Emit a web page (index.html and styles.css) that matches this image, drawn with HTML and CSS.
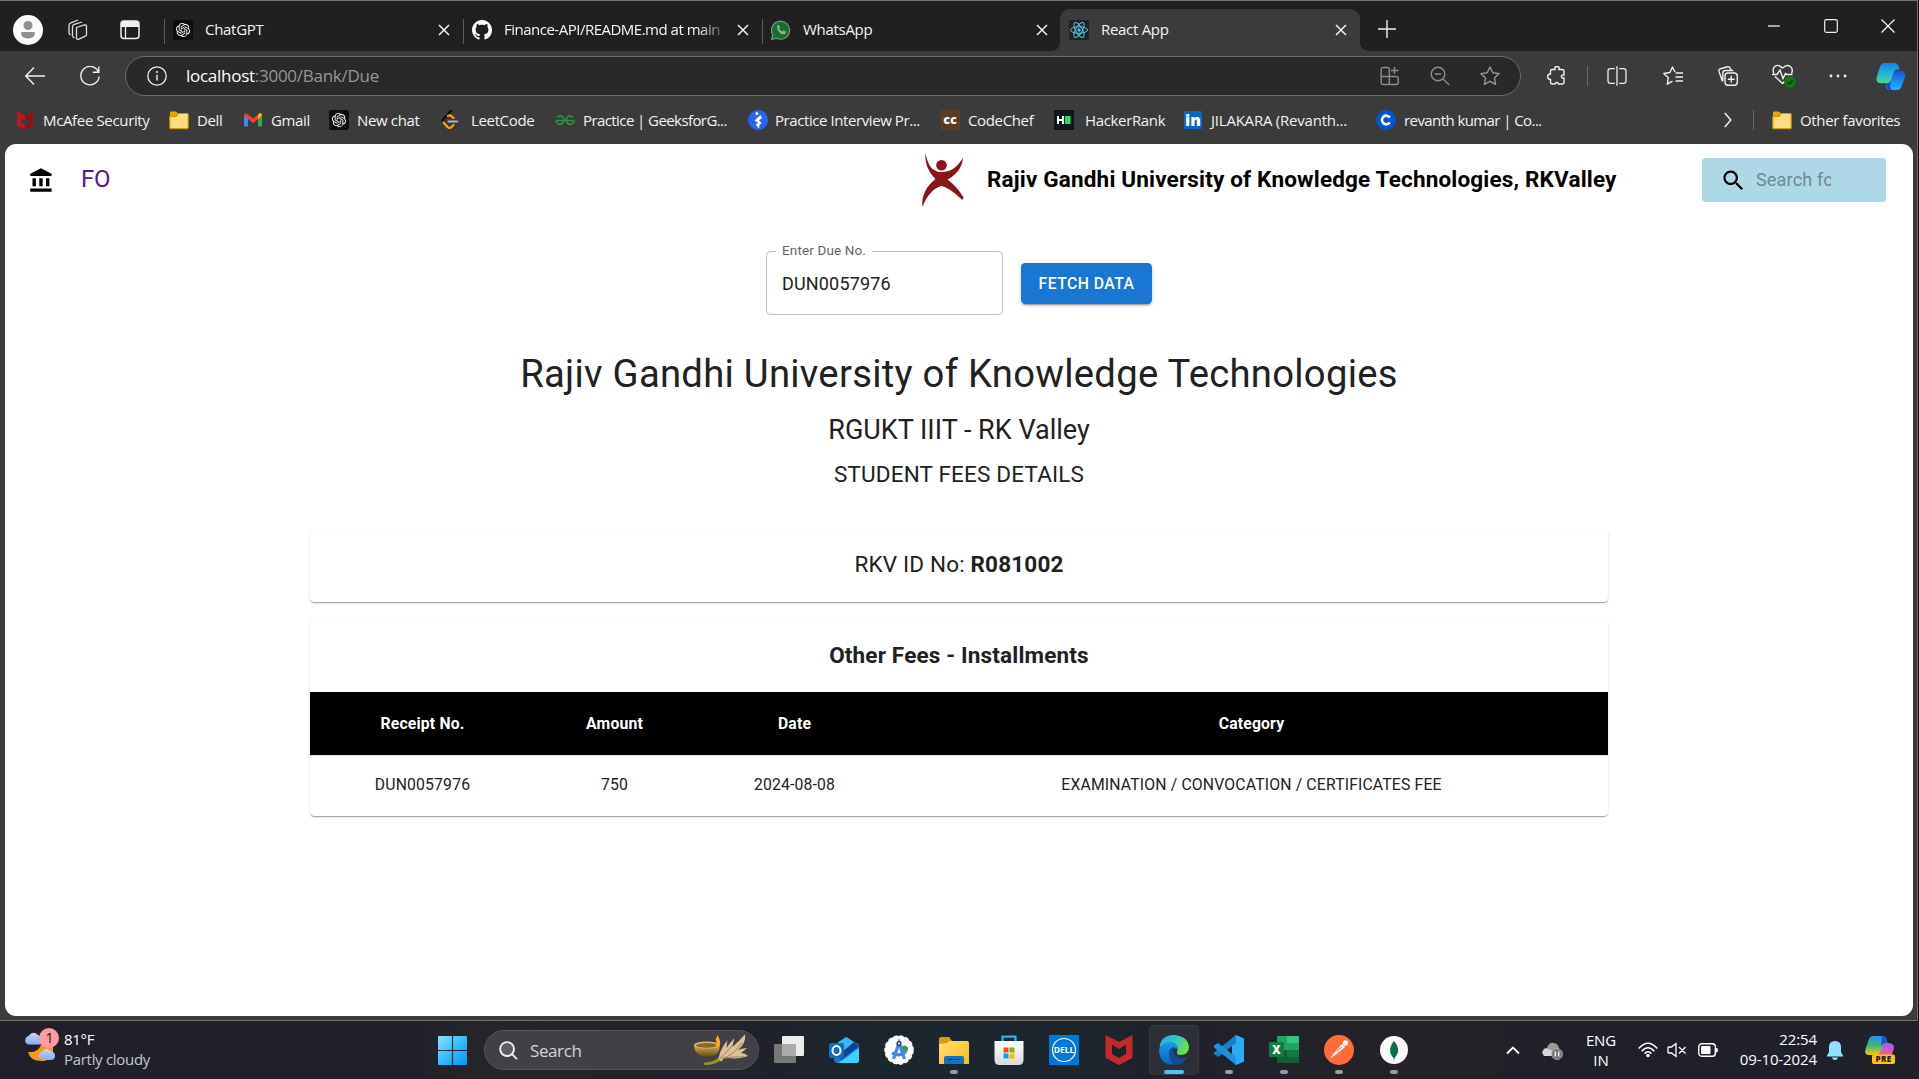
FILE: index.html
```html
<!DOCTYPE html>
<html lang="en">
<head>
<meta charset="utf-8">
<title>React App</title>
<link rel="stylesheet" href="styles.css">
</head>
<body>
<svg class="defs" aria-hidden="true">
  <defs>
    <symbol id="close" viewBox="0 0 12 12"><path d="M1 1l10 10M11 1L1 11" fill="none" stroke="#f2f2f2" stroke-width="1.5"/></symbol>
    <symbol id="folder" viewBox="0 0 20 20"><path d="M1 2.5q0-1 1-1h5l2 2-2 3H1z" fill="#e0a800"/><path d="M.8 6.5H7l2-3h9.2q1 0 1 1v13.2q0 1-1 1H1.800q-1 0-1-1z" fill="#ffdc7c" stroke="#c99500" stroke-width="1.1"/></symbol>
    <symbol id="openai" viewBox="0 0 34 34"><rect width="34" height="34" rx="5" fill="#0d0d0d"/><path transform="translate(5 5)" fill="#fff" d="M22.2819 9.8211a5.9847 5.9847 0 0 0-.5157-4.9108 6.0462 6.0462 0 0 0-6.5098-2.9A6.0651 6.0651 0 0 0 4.9807 4.1818a5.9847 5.9847 0 0 0-3.9977 2.9 6.0462 6.0462 0 0 0 .7427 7.0966 5.98 5.98 0 0 0 .511 4.9107 6.051 6.051 0 0 0 6.5146 2.9001A5.9847 5.9847 0 0 0 13.2599 24a6.0557 6.0557 0 0 0 5.7718-4.2058 5.9894 5.9894 0 0 0 3.9977-2.9001 6.0557 6.0557 0 0 0-.7475-7.0729zm-9.022 12.6081a4.4755 4.4755 0 0 1-2.8764-1.0408l.1419-.0804 4.7783-2.7582a.7948.7948 0 0 0 .3927-.6813v-6.7369l2.02 1.1686a.071.071 0 0 1 .038.052v5.5826a4.504 4.504 0 0 1-4.4945 4.4944zm-9.6607-4.1254a4.4708 4.4708 0 0 1-.5346-3.0137l.142.0852 4.783 2.7582a.7712.7712 0 0 0 .7806 0l5.8428-3.3685v2.3324a.0804.0804 0 0 1-.0332.0615L9.74 19.9502a4.4992 4.4992 0 0 1-6.1408-1.6464zM2.3408 7.8956a4.485 4.485 0 0 1 2.3655-1.9728V11.6a.7664.7664 0 0 0 .3879.6765l5.8144 3.3543-2.0201 1.1685a.0757.0757 0 0 1-.071 0l-4.8303-2.7865A4.504 4.504 0 0 1 2.3408 7.872zm16.5963 3.8558L13.1038 8.364 15.1192 7.2a.0757.0757 0 0 1 .071 0l4.8303 2.7913a4.4944 4.4944 0 0 1-.6765 8.1042v-5.6772a.79.79 0 0 0-.407-.667zm2.0107-3.0231l-.142-.0852-4.7735-2.7818a.7759.7759 0 0 0-.7854 0L9.409 9.2297V6.8974a.0662.0662 0 0 1 .0284-.0615l4.8303-2.7866a4.4992 4.4992 0 0 1 6.6802 4.66zM8.3065 12.863l-2.02-1.1638a.0804.0804 0 0 1-.038-.0567V6.0742a4.4992 4.4992 0 0 1 7.3757-3.4537l-.142.0805L8.704 5.459a.7948.7948 0 0 0-.3927.6813zm1.0976-2.3654l2.602-1.4998 2.6069 1.4998v2.9994l-2.5974 1.4997-2.6067-1.4997Z"/></symbol>
    <linearGradient id="win" x1="0" y1="0" x2="1" y2="1"><stop offset="0" stop-color="#8be4ff"/><stop offset=".5" stop-color="#36bdfb"/><stop offset="1" stop-color="#0a93f5"/></linearGradient>
    <linearGradient id="cop1" x1="0" y1="0" x2="0" y2="1"><stop offset="0" stop-color="#1780e8"/><stop offset=".5" stop-color="#1fb3dc"/><stop offset="1" stop-color="#4fd78f"/></linearGradient>
    <linearGradient id="cop2" x1="0" y1="0" x2="0" y2="1"><stop offset="0" stop-color="#1c50d8"/><stop offset="1" stop-color="#1cb8ff"/></linearGradient>
    <linearGradient id="pre1" x1="0" y1="0" x2="0" y2="1"><stop offset="0" stop-color="#2e8cf0"/><stop offset=".5" stop-color="#3cb878"/><stop offset="1" stop-color="#ffc800"/></linearGradient>
    <linearGradient id="pre2" x1="0" y1="0" x2="0" y2="1"><stop offset="0" stop-color="#a45cf5"/><stop offset="1" stop-color="#f5608c"/></linearGradient>
    <linearGradient id="edge1" x1="0" y1="0" x2="1" y2=".4"><stop offset="0" stop-color="#28a9e8"/><stop offset=".5" stop-color="#2cc3d4"/><stop offset="1" stop-color="#68e04a"/></linearGradient>
    <linearGradient id="edge2" x1="0" y1="0" x2="0" y2="1"><stop offset="0" stop-color="#1a9de4"/><stop offset="1" stop-color="#0a63c4"/></linearGradient>
    <linearGradient id="fold" x1="0" y1="0" x2="1" y2="1"><stop offset="0" stop-color="#ffe07a"/><stop offset="1" stop-color="#fdbb10"/></linearGradient>
    <linearGradient id="cloud" x1="0" y1="0" x2="0" y2="1"><stop offset="0" stop-color="#c0d6fc"/><stop offset="1" stop-color="#8aaeed"/></linearGradient>
    <linearGradient id="bowl" x1="0" y1="0" x2="0" y2="1"><stop offset="0" stop-color="#d8b35a"/><stop offset="1" stop-color="#6a4a14"/></linearGradient>
    <linearGradient id="bag" x1="0" y1="0" x2="0" y2="1"><stop offset="0" stop-color="#fff"/><stop offset="1" stop-color="#d8d8d8"/></linearGradient>
  </defs>
</svg>

<div class="window">
  <header class="titlebar">
    <div class="corner">
      <svg class="avatar" viewBox="0 0 30 30"><circle cx="15" cy="15" r="15" fill="#fafafa"/><circle cx="15" cy="10.500" r="4.500" fill="#8f8f8f"/><path d="M8 17h14q0 6.500-7 6.500T8 17z" fill="#8f8f8f"/></svg>
      <svg class="workspaces" viewBox="0 0 22 22" fill="none" stroke="#ddd" stroke-width="1.300"><path d="M10.500 8.500l8-2.500q2-.5 2 1.500v8q0 1.200-1.200 1.700l-6.500 3q-2.300.8-2.300-1.500z"/><path d="M6.500 17.500V8q0-2 1.800-2.600L16 3M3 14.500V6.500q0-2 1.800-2.600L12 1"/><path d="M6.500 17.500l2 1.500M3 14.500l1.500 1.500"/></svg>
      <svg class="tabmenu" viewBox="0 0 20 20"><rect x="1" y="1" width="18" height="17.500" rx="3" fill="none" stroke="#f0f0f0" stroke-width="1.500"/><path d="M1 4q0-3 3-3h12q3 0 3 3v3H1z" fill="#f0f0f0"/><path d="M5.500 7v11" stroke="#f0f0f0" stroke-width="1.300"/></svg>
    </div>
    <div class="tab">
      <svg class="favicon"><use href="#openai"/></svg>
      <span class="tab-title">ChatGPT</span>
      <svg class="tab-close"><use href="#close"/></svg>
    </div>
    <div class="tab">
      <svg class="favicon" viewBox="0 0 16 16"><path fill="#fff" d="M8 0C3.580 0 0 3.580 0 8c0 3.540 2.290 6.530 5.470 7.590.4.070.55-.17.55-.38 0-.19-.01-.82-.01-1.490-2.010.37-2.530-.49-2.690-.94-.09-.23-.48-.94-.82-1.130-.28-.15-.68-.52-.01-.53.63-.01 1.080.58 1.230.82.72 1.210 1.870.87 2.330.66.07-.52.28-.87.51-1.070-1.780-.2-3.640-.89-3.640-3.950 0-.87.31-1.590.82-2.150-.08-.2-.36-1.020.08-2.120 0 0 .67-.21 2.200.82.64-.18 1.320-.27 2-.27.68 0 1.360.09 2 .27 1.530-1.040 2.200-.82 2.200-.82.44 1.100.16 1.920.08 2.120.51.56.82 1.270.82 2.150 0 3.070-1.870 3.750-3.650 3.950.29.25.54.73.54 1.480 0 1.070-.01 1.930-.01 2.200 0 .21.15.46.55.38A8.013 8.013 0 0016 8c0-4.420-3.580-8-8-8z"/></svg>
      <span class="tab-title fade">Finance-API/README.md at main</span>
      <svg class="tab-close"><use href="#close"/></svg>
    </div>
    <div class="tab">
      <svg class="favicon" viewBox="0 0 20 20"><path d="M.5 19.500l1.300-4.800A9 9 0 1 1 5.500 18.200z" fill="#15702d" stroke="#8c8c8c" stroke-width="1.200"/><path d="M6.500 5.500c.8-.8 1.500-.3 1.800.5l.5 1.300c0 .6-.8 1-.8 1.300.8 1.600 1.900 2.500 3.400 3.100.5 0 .9-1.100 1.400-1.100l2 1c.4.4-.2 2-1.200 2.400-3.500 1.300-9-4.200-7.100-8.500z" fill="#a5a5a5"/></svg>
      <span class="tab-title">WhatsApp</span>
      <svg class="tab-close"><use href="#close"/></svg>
    </div>
    <div class="tab active">
      <svg class="favicon" viewBox="0 0 20 20"><rect width="20" height="20" rx="2" fill="#202226"/><g fill="none" stroke="#58c4dc" stroke-width="1"><ellipse cx="10" cy="10" rx="8.500" ry="3.300"/><ellipse cx="10" cy="10" rx="8.500" ry="3.300" transform="rotate(60 10 10)"/><ellipse cx="10" cy="10" rx="8.500" ry="3.300" transform="rotate(120 10 10)"/></g><circle cx="10" cy="10" r="1.700" fill="#58c4dc"/></svg>
      <span class="tab-title">React App</span>
      <svg class="tab-close"><use href="#close"/></svg>
    </div>
    <svg class="newtab" viewBox="0 0 18 18"><path d="M9 0v18M0 9h18" stroke="#f0f0f0" stroke-width="1.400"/></svg>
    <div class="controls">
      <svg viewBox="0 0 14 14"><path d="M1 7h12" stroke="#fff" stroke-width="1.200"/></svg>
      <svg viewBox="0 0 14 14"><rect x=".7" y=".7" width="12.600" height="12.600" rx="1.500" fill="none" stroke="#eee" stroke-width="1.200"/></svg>
      <svg viewBox="0 0 14 14"><path d="M.5.500l13 13M13.500.500l-13 13" stroke="#fff" stroke-width="1.200"/></svg>
    </div>
  </header>

  <div class="toolbar">
    <svg class="ic20" viewBox="0 0 20 20" fill="none" stroke="#f0f0f0" stroke-width="1.400"><path d="M20 10H1M9 1.500L.8 10 9 18.500"/></svg>
    <svg class="ic20" viewBox="0 0 20 20" fill="none" stroke="#eee" stroke-width="1.400"><path d="M18.500 6A9.200 9.200 0 1 0 19.200 10.500M18.800.5V6.200h-6"/></svg>
    <div class="address">
      <svg class="ic20" viewBox="0 0 20 20"><circle cx="10" cy="10" r="9.200" fill="none" stroke="#eee" stroke-width="1.300"/><path d="M10 8.800v5.700" stroke="#eee" stroke-width="1.400"/><circle cx="10" cy="6" r="1" fill="#eee"/></svg>
      <span class="url"><b>localhost</b>:3000/Bank/Due</span>
      <svg class="ic20" viewBox="0 0 20 20" fill="none" stroke="#8b8b8b" stroke-width="1.400"><path d="M9.300 18.500V3.500q0-2-2-2H3.200q-2 0-2 2v13q0 2 2 2h13q2 0 2-2v-4q0-2-2-2H1.200M14.500 1v7M11 4.500h7.500"/></svg>
      <svg class="ic20" viewBox="0 0 20 20" fill="none" stroke="#8b8b8b" stroke-width="1.400"><circle cx="8" cy="8" r="6.800"/><path d="M13 13l6.300 6M4.800 8h6.400"/></svg>
      <svg class="ic20" viewBox="0 0 20 20" fill="none" stroke="#969696" stroke-width="1.400" stroke-linejoin="round"><path d="M10 1l2.800 5.700 6.300.9-4.600 4.400 1.100 6.300L10 15.300l-5.600 3 1.100-6.300L.9 7.600l6.300-.9z"/></svg>
    </div>
    <svg class="ic20" viewBox="0 0 20 20" fill="none" stroke="#f0f0f0" stroke-width="1.400"><path d="M3.500 5Q3.500 3.500 5 3.500h3q-.7-3 2-3t2 3h3q2 0 2 2v3.500q-2.500-.5-2.500 1.500t2.500 1.500V16q0 2-2 2h-3.500q-.3-1.500-1.800-1.500T8 18H5.500q-2 0-2-2v-2.500Q.7 13.500.7 10.700t2.800-2.700z"/></svg>
    <i class="rule"></i>
    <svg class="ic20" viewBox="0 0 20 20" fill="none" stroke="#f0f0f0" stroke-width="1.300"><path d="M7.800 17.300H3.500q-2.500 0-2.500-2.500V5.200q0-2.500 2.500-2.500h4.300M12.200 2.700h4.300q2.500 0 2.500 2.500v9.600q0 2.500-2.500 2.500h-4.300M10 .3v19.400"/></svg>
    <svg class="ic20" viewBox="0 0 20 20" fill="none" stroke="#f0f0f0" stroke-width="1.400" stroke-linejoin="round"><path d="M12 6L9.500 1 6.900 6.500.8 7.500l4.500 4.200-1 6.400 5.200-2.900M12.500 7H20M12.500 11H20M12.500 15H20"/></svg>
    <svg class="ic20" viewBox="0 0 20 20" fill="none" stroke="#f0f0f0" stroke-width="1.400"><rect x="7" y="7" width="12.300" height="12.300" rx="3"/><path d="M13.200 9.800v6.800M9.800 13.200h6.800M4.500 15.500L1 5.500Q.5 3.500 2.500 2.700L9.500.8q2-.3 2.800 1.500L13 4.500M4.800 15V7q0-2.500 2.500-2.500h8"/></svg>
    <svg class="heart" viewBox="0 0 24 24" fill="none" stroke="#f0f0f0" stroke-width="1.400"><path d="M1.800 9.500Q0 4.500 3 2.200T10.500 4Q15 0 18.300 2.500T19.500 9.500M3 12.500l7.500 7 2-2M0 10.500h5L8 6l3 8.500 2.500-5 1 1h6"/><circle cx="18" cy="18" r="5.700" fill="#107c10" stroke="none"/><path d="M15.200 18l2 2 3.500-4" stroke="#0a3a0a"/></svg>
    <svg class="ic20" viewBox="0 0 20 20" fill="#f0f0f0"><circle cx="3" cy="10" r="1.400"/><circle cx="10" cy="10" r="1.400"/><circle cx="17" cy="10" r="1.400"/></svg>
    <svg class="copilot" viewBox="0 0 30 28"><path d="M14 8h10q5-.5 6 5l-4 11q-1.500 4-5 4h-7q-4 0-4-6z" fill="url(#cop2)"/><path d="M8 0h11q3 0 4 4l1 3q-5-1-6.500 3l-2.500 8q-1 3-4 3H5q-6 0-5-6L3.500 4Q5 0 8 0z" fill="url(#cop1)"/><path d="M10.500 21q3.500 0 4.500-4l-1 6q0 4 2 5h-2q-3.500 0-3.500-7z" fill="#1b3fe0"/></svg>
  </div>

  <nav class="bookmarks">
    <span class="bm"><svg viewBox="0 0 20 20"><path d="M2 1l8 4.500v5L6 8.500V13l4 2.200V20l-8-4.500z" fill="#c01818"/><path d="M18 1l-8 4.500v5l4-2V13l-4 2.200V20l8-4.500z" fill="#8c1414"/></svg>McAfee Security</span>
    <span class="bm"><svg><use href="#folder"/></svg>Dell</span>
    <span class="bm"><svg viewBox="0 0 20 20"><path d="M1 5v10.500q0 1 1 1h3V8z" fill="#4285f4"/><path d="M15 8v8.500h3q1 0 1-1V5z" fill="#34a853"/><path d="M1 5.500Q1 3 3 3l7 5.500L17 3q2 0 2 2.500L15 9l-5 4-5-4z" fill="#ea4335"/><path d="M15 5l2-2q2 0 2 2.500L15 9z" fill="#fbbc04"/></svg>Gmail</span>
    <span class="bm"><svg><use href="#openai"/></svg>New chat</span>
    <span class="bm lc"><svg viewBox="0 0 20 20" fill="none" stroke-linecap="round" stroke-width="2.200"><path d="M11 1L3.500 9q-1.800 2 0 4" stroke="#0c0c0c"/><path d="M8 5.800q2-1 3.500.5L13.500 8M3.500 12.500l4 4.500q2 2 4 0l2-2" stroke="#ffa116"/><path d="M8.500 11.500H17" stroke="#b3b3b3"/></svg>LeetCode</span>
    <span class="bm tight"><svg viewBox="0 0 20 20" fill="none" stroke="#2f8d46" stroke-width="1.700"><path d="M1 10.500h18M2 7.500q3-3 5.500-.5T8 12.500t-5 1.200-1.500-3.200M18 7.500q-3-3-5.500-.5t-.5 5.500 5 1.200 1.500-3.200"/></svg>Practice | GeeksforG...</span>
    <span class="bm pi"><svg viewBox="0 0 20 20"><circle cx="10" cy="10" r="10" fill="#2a62f5"/><circle cx="8.800" cy="3.500" r="1.500" fill="#fff"/><path d="M12.500 5L6.500 10.500l4 2.500-3 1.500 3.500 4 .5-3.500 2-2-2.500-2.800 3-2z" fill="#fff"/></svg>Practice Interview Pr...</span>
    <span class="bm"><svg viewBox="0 0 20 20"><rect width="20" height="20" fill="#5b3a26"/><text x="10" y="14" class="cc">cc</text></svg>CodeChef</span>
    <span class="bm hr"><svg viewBox="0 0 20 20"><rect width="20" height="20" fill="#0e141e"/><path d="M4 6v8M9 6v8M4 10h5" stroke="#fff" stroke-width="2" fill="none"/><rect x="11" y="6" width="5.500" height="8" fill="#1ee063"/></svg>HackerRank</span>
    <span class="bm jr"><svg viewBox="0 0 20 20"><rect x="1" y="1" width="18" height="18" rx="1.500" fill="#0a66c2"/><text x="10" y="16" class="in">in</text></svg>JILAKARA (Revanth...</span>
    <span class="bm tight"><svg viewBox="0 0 20 20"><circle cx="10" cy="10" r="10" fill="#0056d2"/><path d="M13.800 7.500A4.300 4.300 0 1 0 13.800 12.500" fill="none" stroke="#fff" stroke-width="2.700"/></svg>revanth kumar | Co...</span>
    <svg class="chev" viewBox="0 0 8 16"><path d="M.8 1l6 7-6 7" fill="none" stroke="#f0f0f0" stroke-width="1.500"/></svg>
    <i class="rule"></i>
    <span class="bm"><svg><use href="#folder"/></svg>Other favorites</span>
  </nav>

  <main class="page">
    <header class="appbar">
      <svg class="bank" viewBox="0 0 24 24"><path d="M4 10v7h3v-7H4zm6 0v7h3v-7h-3zM2 22h19v-3H2v3zm14-12v7h3v-7h-3zm-4.500-9L2 6v2h19V6l-9.500-5z"/></svg>
      <a class="fo">FO</a>
      <svg class="logo" viewBox="0 0 42 54" fill="#8a1518"><circle cx="20" cy="12.300" r="5.300"/><path d="M4 0C6 11 10 19 20 19S37 13 41.500 4.500C41 14 35 22 26 26.500C32 31 38 37 42 44.500L41 47C34 41 27 34.500 20 33C12 35 5 43 1 54C-.5 43 5 33 14 26C7 19 3 10 4 0z"/></svg>
      <h1 class="brand">Rajiv Gandhi University of Knowledge Technologies, RKValley</h1>
      <div class="search"><svg viewBox="0 0 24 24"><path d="M15.500 14h-.79l-.28-.27C15.410 12.590 16 11.110 16 9.500 16 5.910 13.090 3 9.500 3S3 5.910 3 9.500 5.910 16 9.500 16c1.610 0 3.090-.59 4.230-1.570l.27.28v.79l5 4.990L20.490 19l-4.990-5zm-6 0C7.010 14 5 11.990 5 9.500S7.010 5 9.500 5 14 7.010 14 9.500 11.990 14 9.500 14z"/></svg><input type="text" placeholder="Search for"></div>
    </header>

    <form class="lookup">
      <fieldset class="field"><legend>Enter Due No.</legend><span>DUN0057976</span></fieldset>
      <button type="button" class="fetch">FETCH DATA</button>
    </form>

    <section class="headings">
      <h2>Rajiv Gandhi University of Knowledge Technologies</h2>
      <h3>RGUKT IIIT - RK Valley</h3>
      <h4>STUDENT FEES DETAILS</h4>
    </section>

    <section class="card idcard">RKV ID No:&nbsp;<b>R081002</b></section>

    <section class="card fees">
      <h4>Other Fees - Installments</h4>
      <table>
        <colgroup><col class="c1"><col class="c2"><col class="c3"><col></colgroup>
        <thead><tr><th>Receipt No.</th><th>Amount</th><th>Date</th><th>Category</th></tr></thead>
        <tbody><tr><td>DUN0057976</td><td>750</td><td>2024-08-08</td><td>EXAMINATION / CONVOCATION / CERTIFICATES FEE</td></tr></tbody>
      </table>
    </section>
  </main>
</div>

<footer class="taskbar">
  <div class="weather">
    <svg viewBox="0 0 34 36"><path d="M3 17.500A4.500 4.500 0 0 1 3.500 9Q8 3 13 8q4 1 4 9.500z" fill="url(#cloud)"/><path d="M3 25q10 1 13-7 6-3 12 1v9q-4 6-11 6Q5 34 3 25z" fill="#f59a1c"/><path d="M16 33a4.500 4.500 0 0 1 .5-8q4-6 9-1 5 1 4.500 6-1 3-4 3z" fill="url(#cloud)"/><circle cx="24" cy="11" r="10" fill="#ff9aa2"/><text x="24.500" y="16" class="badge">1</text></svg>
    <div><p>81°F</p><p class="dim">Partly cloudy</p></div>
  </div>
  <svg class="start" viewBox="0 0 29 29" fill="url(#win)"><path d="M0 1q0-1 1-1h27q1 0 1 1v27q0 1-1 1H1q-1 0-1-1z"/><path d="M14.500 0v29M0 14.500h29" stroke="#1d2630" stroke-width="1.200"/></svg>
  <div class="searchbox">
    <svg class="lens" viewBox="0 0 20 20" fill="none" stroke="#eee" stroke-width="2"><circle cx="8.500" cy="8.500" r="7.300" fill="#5c5c62"/><path d="M14 14l5 5"/></svg>
    <span>Search</span>
    <svg class="lamp" viewBox="0 0 58 32"><path d="M1 11h26q1 9-8 11.500h-9Q1 20 1 11z" fill="url(#bowl)"/><ellipse cx="14" cy="11" rx="13" ry="3.600" fill="#d9b868"/><ellipse cx="14" cy="11.300" rx="11" ry="2.400" fill="#8a6828"/><path d="M22 14q3-4 1-9l2-4q4 6 2 11z" fill="#ffa81e"/><path d="M11 29q12-1 16-7l2 4q-7 6-18 5z" fill="#8f9a20"/><path d="M26 25q1-9 9-19l-1 8q4-6 8-10l-2 9q7-6 13-13 1 9-7 16 5-2 9-2l-6 5q4 0 7 3-12 4-20 2-5-1-7 4z" fill="#dcc09a"/><path d="M27 25q8-7 13-14M29 25q12-3 21-17M31 25q12-3 21-2" stroke="#8f7050" stroke-width=".8" fill="none"/></svg>
  </div>
  <div class="apps">
    <span class="app"><svg viewBox="0 0 30 30"><rect x="8" y="1" width="22" height="20" rx="1" fill="#ececec"/><path d="M1 9h21v19H1q-1 0-1-1V10q0-1 1-1z" fill="#777"/><path d="M8 9h14v12H8z" fill="#aaa"/></svg></span>
    <span class="app"><svg viewBox="0 0 30 30"><path d="M5 11L18 2l12 9v14q0 3-3 3H9q-4 0-4-3z" fill="#1177d1"/><path d="M5 10l12-8 13 8-14 9z" fill="#36b8f5"/><path d="M12 18L25 7l5 4-18 14z" fill="#0c3f96"/><path d="M15 24L30 13v12q0 3-3 3H9z" fill="#3fd4fa"/><rect y="8" width="15" height="15" rx="2" fill="#0f6cbd"/><ellipse cx="7.500" cy="15.500" rx="4" ry="4.500" fill="none" stroke="#fff" stroke-width="2"/></svg></span>
    <span class="app"><svg viewBox="0 0 30 30"><circle cx="15" cy="15" r="14" fill="#fff" stroke="#fff" stroke-width="1.500" stroke-dasharray="4 2"/><circle cx="20.500" cy="14" r="3.500" fill="#34a058"/><path d="M9.500 24L15 8l5.500 16M8 18q7 4 14-1" fill="none" stroke="#4285f4" stroke-width="3.200"/><circle cx="15" cy="8.500" r="2.600" fill="#3a3f48"/><circle cx="15" cy="8.500" r="1.100" fill="#fff"/></svg></span>
    <span class="app run"><svg viewBox="0 0 30 30"><path d="M0 4q0-2 2-2h8l3 4h15v6H0z" fill="#dd9c08"/><path d="M0 9q8 0 11-3h17q2 0 2 2v21H0z" fill="url(#fold)"/><path d="M5 29v-6q0-2 2-2h16q2 0 2 2v6z" fill="#0f72c8"/><path d="M9 24.500h12" stroke="#06417a"/></svg></span>
    <span class="app"><svg viewBox="0 0 30 30"><path d="M8.500 7V1.700h13V7" fill="none" stroke="#28b4f0" stroke-width="2.200"/><path d="M.5 6h29v19q0 5-5 5h-19q-5 0-5-5z" fill="url(#bag)"/><path d="M9.500 12.500h5v5h-5z" fill="#f25022"/><path d="M15.500 12.500h5v5h-5z" fill="#7fba00"/><path d="M9.500 18.500h5v5h-5z" fill="#00a4ef"/><path d="M15.500 18.500h5v5h-5z" fill="#ffb900"/></svg></span>
    <span class="app"><svg viewBox="0 0 30 30"><path fill="#0078d6" d="M0 0h30v30H0z"/><circle cx="15" cy="15" r="11.500" fill="none" stroke="#fff" stroke-width="1.200"/><text x="15" y="18" class="dell">DELL</text></svg></span>
    <span class="app"><svg viewBox="0 0 30 30"><path d="M1.500 0L15 7 28.500 0v23L15 30 1.500 23zM8 9.500V19l7 4 7-4V9.500L15 14z" fill="#c02a2c"/></svg></span>
    <span class="app current"><svg viewBox="0 0 30 30"><path d="M.5 12Q2 0 15 0q14 1 15 12 0 7-8 8-5 0-4-3 2-4-3-5.500-8-2-14.500.5z" fill="url(#edge1)"/><path d="M0 15Q3 6 12 7q7 1 7 7-3-2-6 1-4 6 1 11 3 3 6 3Q1 33 0 15z" fill="url(#edge2)"/><path d="M10 18q1-7 6-6-3 4 0 8 5 5 12 2-4 8-12 8-6-4-6-12z" fill="#124a94"/></svg></span>
    <span class="app run"><svg viewBox="0 0 30 30"><path d="M22 0l8 3.500v23L22 30l-4-4V4z" fill="#2badf5"/><path d="M22 0v8L4 22l-4-3v-1.500z" fill="#1580c8"/><path d="M0 10.500L4 8l18 14v8L0 12.500z" fill="#1c92dc"/></svg></span>
    <span class="app run"><svg viewBox="0 0 30 30"><path d="M8 1h11v14H8z" fill="#21a366"/><path d="M18 1h11q1 0 1 1v6H18z" fill="#33c481"/><path d="M18 8h12v7H18z" fill="#21a366"/><path d="M8 15h11v7H8z" fill="#185c37"/><path d="M18 15h12v7H18z" fill="#107c41"/><path d="M8 22h22v6H8z" fill="#185c37"/><rect y="7" width="15" height="15" rx="1" fill="#107c41"/><text x="7.500" y="19" class="xl">X</text></svg></span>
    <span class="app run"><svg viewBox="0 0 30 30"><circle cx="15" cy="15" r="15" fill="#ff6c37"/><path d="M18 9l3 3-9 7.500-6 4 4.500-6z" fill="#fff"/><circle cx="21.500" cy="8" r="2.700" fill="#fff"/><path d="M13 16l5-4" stroke="#ff6c37"/></svg></span>
    <span class="app run"><svg viewBox="0 0 30 30"><circle cx="15" cy="15" r="14" fill="#fafafa"/><path d="M15 6q-8 9-.5 17z" fill="#13aa52"/><path d="M15 6q8 9 .5 17l-.5 3-.5-3q-6-8 .5-17z" fill="#0b6b4f"/></svg></span>
  </div>
  <div class="tray">
    <svg class="up" viewBox="0 0 14 9"><path d="M1 7.500L7 1.500l6 6" fill="none" stroke="#fff" stroke-width="1.800"/></svg>
    <svg class="onedrive" viewBox="0 0 21 18"><path d="M5 6Q7 0 12 1t5 6l-5 7H3z" fill="#9a9a9a"/><path d="M2 14q-4-5 1.500-8L14 10v4z" fill="#d5d5d5"/><circle cx="15" cy="12" r="5.500" fill="#777" stroke="#bbb" stroke-width=".7"/><path d="M13.300 9.500v5M16.700 9.500v5" stroke="#fff" stroke-width="1.300"/></svg>
    <div class="lang">ENG<br>IN</div>
    <svg class="wifi" viewBox="0 0 20 16" fill="none" stroke="#fff" stroke-width="1.500"><path d="M.8 6.500q9.200-10.500 18.400 0M3.700 9.200q6.300-7 12.600 0M6.600 11.700q3.400-3.700 6.800 0"/><circle cx="10" cy="13.500" r="1.700" fill="#fff" stroke="none"/></svg>
    <svg class="mute" viewBox="0 0 20 16" fill="none" stroke="#fff" stroke-width="1.300"><path d="M9 1.500v13L4.500 11H1.700Q1 11 1 10V6q0-1 .7-1h2.800zM12 5l6.500 6.500M18.500 5L12 11.500"/></svg>
    <svg class="battery" viewBox="0 0 20 14"><rect x=".8" y=".8" width="16.500" height="12.400" rx="2.800" fill="none" stroke="#fff" stroke-width="1.400"/><rect x="3" y="3" width="9.500" height="8" rx="1" fill="#fff"/><path d="M18 4.500q2 0 2 2.500t-2 2.500z" fill="#fff"/></svg>
    <div class="clock">22:54<br>09-10-2024</div>
    <svg class="bell" viewBox="0 0 16 19"><path d="M8 0q6 0 6 6v5l2 3.500v1H0v-1L2 11V6q0-6 6-6zM5 16.500h6q-.5 2.500-3 2.500t-3-2.500z" fill="#8fe3ff"/></svg>
    <svg class="pre" viewBox="0 0 30 28"><path d="M13 7h10q6 0 6 5l-3 9H11z" fill="url(#pre2)"/><path d="M8 0h10q3 0 4 5l.5 2q-4 0-5 3l-2.500 6q-1 3-4 3H4Q-1 19 .5 13L4 3Q5 0 8 0z" fill="url(#pre1)"/><path d="M17 0q4 0 5 7-5 0-6 4z" fill="#2150d0"/><rect x="7" y="18.500" width="23" height="9.500" rx="2" fill="#ffc30f"/><text x="18.500" y="26.300" class="pretext">PRE</text></svg>
  </div>
</footer>
</body>
</html>
```

FILE: styles.css
```css
* { box-sizing: border-box; }
body {
  margin: 0;
  width: 1919px;
  height: 1079px;
  overflow: hidden;
  background: #111;
  font-family: "Open Sans", "Noto Sans", sans-serif;
}
h1, h2, h3, h4, p { margin: 0; font-weight: 400; }
svg { display: block; flex: none; }
.defs { position: absolute; width: 0; height: 0; }

.window {
  width: 1918px;
  height: 1021px;
  border-top: 1px solid #6d716f;
  border-right: 1px solid #6d6d6d;
  border-bottom: 1px solid #6d706e;
  background: #3b3b3b;
}

/* tab strip */
.titlebar { display: flex; height: 50px; background: #202020; }
.corner { display: flex; align-items: center; width: 164px; padding: 8px 0 0 13px; }
.avatar { width: 30px; height: 30px; }
.workspaces { width: 22px; height: 22px; margin-left: 23px; }
.tabmenu { width: 20px; height: 20px; margin-left: 32px; }
.tab {
  display: flex;
  align-items: center;
  width: 299px;
  height: 42px;
  margin-top: 8px;
  padding: 0 13px 0 9px;
  color: #f4f4f4;
  font-size: 15px;
  letter-spacing: -0.3px;
  background: linear-gradient(#5c5c5c, #5c5c5c) 0 10px / 1px 25px no-repeat;
}
.tab.active { position: relative; width: 300px; margin-left: -1px; padding-left: 9px; background: #3b3b3b; border-radius: 10px 10px 0 0; }
.tab.active::before, .tab.active::after {
  content: "";
  position: absolute;
  bottom: 0;
  width: 8px;
  height: 8px;
}
.tab.active::before { left: -8px; background: radial-gradient(circle at 0 0, #202020 7.500px, #3b3b3b 8px); }
.tab.active::after { right: -8px; background: radial-gradient(circle at 100% 0, #202020 7.500px, #3b3b3b 8px); }
.favicon { width: 20px; height: 20px; margin-right: 12px; }
.tab-title { flex: 1; padding-bottom: 2px; white-space: nowrap; overflow: hidden; }
.fade { letter-spacing: -0.5px; -webkit-mask-image: linear-gradient(90deg, #000 88%, #0003); mask-image: linear-gradient(90deg, #000 88%, #0003); }
.tab-close { width: 12px; height: 12px; margin-left: 13px; }
.newtab { width: 18px; height: 18px; margin: 19px 0 0 18px; }
.controls { display: flex; gap: 43px; margin: 18px 0 0 auto; padding-right: 22px; }
.controls svg { width: 14px; height: 14px; }

/* navigation row */
.toolbar {
  display: grid;
  grid-template-columns: 70px 40px 15px 1396px 6px 60px 1px 58px 54px 56px 55px 53px 53px;
  align-items: center;
  justify-items: center;
  height: 50px;
}
.toolbar > :nth-child(3) { grid-column: 4; }
.toolbar > :nth-child(4) { grid-column: 6; }
.ic20 { width: 20px; height: 20px; }
.rule { width: 1px; height: 20px; background: #6a6a6a; }
.address {
  display: flex;
  align-items: center;
  width: 1396px;
  height: 40px;
  padding: 0 20px 0 21px;
  gap: 30px;
  border: 1px solid #6b6b6b;
  border-radius: 20px;
  background: #292929;
}
.url { flex: 1; margin-left: -11px; padding-bottom: 2px; color: #969696; font-size: 17px; letter-spacing: -0.27px; }
.url b { color: #fff; font-weight: 400; }
.heart { width: 24px; height: 24px; }
.copilot { width: 30px; height: 27px; }

/* favourites bar */
.bookmarks {
  display: grid;
  grid-template-columns: 154px 74px 86px 111px 115px 193px 192px 114px 129px 193px 348px 29px 19px 140px;
  align-items: center;
  height: 43px;
  padding: 0 0 5px 15px;
  color: #f2f2f2;
  font-size: 15px;
  letter-spacing: -0.35px;
}
.bm { display: flex; align-items: center; gap: 8px; white-space: nowrap; }
.bm svg { width: 20px; height: 20px; }
.tight { letter-spacing: -0.58px; }
.lc { gap: 11px; }
.pi { gap: 7px; letter-spacing: -0.42px; }
.hr { gap: 11px; }
.jr { letter-spacing: -0.22px; }
.chev { width: 8px; height: 16px; }
.bookmarks .rule { height: 20px; }
.cc { font: 800 12.500px "Open Sans", sans-serif; text-anchor: middle; fill: #fff; letter-spacing: 0; }
.in { font: 800 16px "Open Sans", sans-serif; text-anchor: middle; fill: #fff; letter-spacing: 0; }

/* web page */
.page {
  width: 1908px;
  height: 872px;
  margin-left: 5px;
  border-radius: 11px;
  background: #fff;
  color: #212121;
  font-family: Roboto, sans-serif;
}
.appbar { display: flex; align-items: center; height: 72px; padding: 0 27px 0 23px; color: #000; }
.bank { width: 27px; height: 27px; }
.fo { margin-left: 26px; padding-bottom: 2px; width: 838px; color: #551a8b; font-size: 24px; letter-spacing: -0.3px; }
.logo { width: 43px; height: 54px; margin-left: 2px; }
.brand { margin-left: 23px; padding-bottom: 2px; font-size: 22.500px; font-weight: 700; letter-spacing: 0.17px; white-space: nowrap; }
.search {
  display: flex;
  align-items: center;
  width: 184px;
  height: 44px;
  margin-left: auto;
  padding-left: 18px;
  border-radius: 4px;
  background: #add8e6;
}
.search svg { width: 27px; height: 27px; }
.search input {
  width: 75px;
  margin-left: 9px;
  padding: 0 0 1px;
  border: 0;
  outline: 0;
  background: none;
  font: 18px Roboto, sans-serif;
  letter-spacing: 0.17px;
}
.search input::placeholder { color: #6d8a93; opacity: 1; }

.lookup { display: flex; gap: 18px; height: 100px; padding: 26px 0 0 761px; }
.field {
  width: 237px;
  height: 73px;
  margin: 0;
  padding: 0 15px;
  border: 1px solid #c0c0c0;
  border-radius: 4.500px;
  min-width: 0;
}
.field legend { margin-left: -6px; padding: 0 6px 2px; color: #666; font-size: 13.500px; line-height: 16px; letter-spacing: 0.13px; }
.field span { display: block; padding-top: 13px; font-size: 18px; line-height: 22px; letter-spacing: 0.17px; }
.fetch {
  width: 131px;
  height: 41px;
  margin-top: 21px;
  padding: 0;
  border: 0;
  border-radius: 4.500px;
  background: #1976d2;
  color: #fff;
  font: 500 15.750px/41px Roboto, sans-serif;
  letter-spacing: 0.45px;
  box-shadow: 0 3px 1px -2px rgba(0,0,0,.2), 0 2px 2px rgba(0,0,0,.14), 0 1px 5px rgba(0,0,0,.12);
}

.headings { height: 213px; padding-top: 35px; text-align: center; }
.headings h2 { font-size: 38.250px; line-height: 47px; letter-spacing: 0.26px; }
.headings h3 { padding-top: 14px; font-size: 27px; line-height: 36px; }
.headings h4 { padding-top: 8px; font-size: 22.500px; line-height: 36px; letter-spacing: 0.17px; }

.card {
  width: 1298px;
  margin: 0 auto;
  border-radius: 4.500px;
  box-shadow: 0 2px 1px -1px rgba(0,0,0,.2), 0 1px 1px rgba(0,0,0,.14), 0 1px 3px rgba(0,0,0,.12);
}
.idcard { display: flex; align-items: center; justify-content: center; height: 73px; padding-bottom: 3px; font-size: 22.500px; letter-spacing: 0.17px; }
.idcard b { font-weight: 700; }
.fees { height: 197px; margin-top: 17px; }
.fees h4 { height: 73px; font-size: 22.500px; font-weight: 700; line-height: 73px; text-align: center; letter-spacing: 0.17px; }
table { width: 100%; table-layout: fixed; border-collapse: collapse; font-size: 15.750px; letter-spacing: 0.16px; }
.c1 { width: 225px; }
.c2 { width: 159px; }
.c3 { width: 201px; }
th { height: 63px; padding: 0; background: #000; color: #fff; font-weight: 700; border-bottom: 1px solid #e0e0e0; }
td { height: 61px; padding: 0 0 2px; text-align: center; }

/* taskbar */
.taskbar {
  display: flex;
  height: 58px;
  color: #fff;
  background: linear-gradient(90deg, #20202a 0, #20202a 400px, #262529 480px, #20222b 780px, #1b262e 880px, #1b262e 1010px, #20212b 1180px, #252328 1430px, #20202a 1560px);
}
.weather { display: flex; width: 438px; padding: 6px 0 0 25px; gap: 5px; font-size: 15px; line-height: 20px; letter-spacing: -0.3px; }
.weather > svg { width: 34px; height: 36px; }
.weather > div { padding-top: 2px; }
.weather .dim { color: #c5c5c8; }
.badge { font: 15px "Open Sans", sans-serif; text-anchor: middle; fill: #222; }
.start { width: 29px; height: 29px; margin-top: 15px; }
.searchbox {
  display: flex;
  align-items: center;
  width: 275px;
  height: 40px;
  margin: 9px 0 0 17px;
  padding: 0 8px 0 14px;
  border: 1px solid #55545a;
  border-radius: 20px;
  background: #414046;
  color: #d4d4d6;
  font-size: 17px;
}
.searchbox span { flex: 1; margin-left: 12px; letter-spacing: -0.4px; }
.lens { width: 19px; height: 19px; }
.lamp { width: 57px; height: 32px; }
.apps { display: flex; gap: 5px; margin: 4px 0 0 5px; }
.app { display: flex; flex-direction: column; align-items: center; width: 50px; height: 50px; padding-top: 10px; border-radius: 5px; }
.app svg { width: 30px; height: 30px; }
.app.run::after, .app.current::after { content: ""; width: 8px; height: 4px; margin-top: 5px; border-radius: 2px; background: #9a9a9d; }
.app.current { background: #2e2e37; box-shadow: inset 0 0 0 1px #383841; }
.app.current::after { width: 20px; background: #4cc2ff; }
.dell { font: 700 8.500px "Open Sans", sans-serif; text-anchor: middle; fill: #fff; }
.xl { font: 800 11.500px "Open Sans", sans-serif; text-anchor: middle; fill: #fff; }
.tray { display: flex; flex: 1; align-items: center; padding: 0 24px 0 87px; font-size: 15px; line-height: 20px; letter-spacing: -0.1px; }
.up { width: 14px; height: 9px; }
.onedrive { width: 21px; height: 18px; margin: 2px 0 0 22px; }
.lang { width: 40px; margin-left: 18px; padding-bottom: 1px; text-align: center; }
.wifi { width: 20px; height: 16px; margin-left: 17px; }
.mute { width: 20px; height: 16px; margin-left: 9px; }
.battery { width: 20px; height: 14px; margin-left: 11px; }
.clock { flex: 1; padding-bottom: 2px; text-align: right; white-space: nowrap; }
.bell { width: 16px; height: 19px; margin-left: 10px; }
.pre { width: 30px; height: 28px; margin-left: 22px; }
.pretext { font: 800 8px "Open Sans", sans-serif; text-anchor: middle; fill: #222; letter-spacing: .3px; }
```
